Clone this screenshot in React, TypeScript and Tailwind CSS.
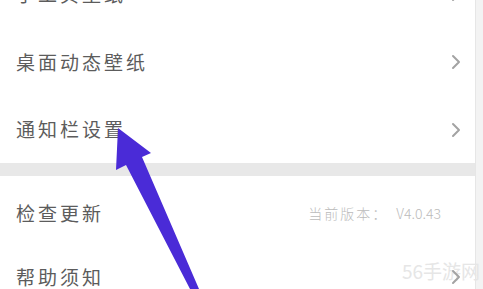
const font = { fontFamily: '"Noto Sans CJK SC", "Noto Sans", sans-serif' };

function Chevron() {
  return (
    <svg width="10" height="16" viewBox="0 0 10 16" className="shrink-0">
      <path d="M2 2 L8 8 L2 14" fill="none" stroke="#a3a3a3" strokeWidth="2" strokeLinecap="round" strokeLinejoin="round" />
    </svg>
  );
}

type Row = { label: string; h: string; arrow?: boolean };

const topRows: Row[] = [
  { label: "手工贝壁纸", h: "h-[68px]", arrow: true },
  { label: "桌面动态壁纸", h: "h-[68px]", arrow: true },
  { label: "通知栏设置", h: "h-[67px]", arrow: true },
];

export default function App() {
  return (
    <div className="relative w-[483px] h-[289px] overflow-hidden bg-white flex items-start" style={font}>
      <div className="w-[475px] shrink-0 flex flex-col -mt-[40px]">
        {topRows.map((r) => (
          <div key={r.label} className={`${r.h} shrink-0 flex items-center justify-between pl-[16px] pr-[14px]`}>
            <span className="text-[19px] tracking-[3px] text-[#5c5c5c]">{r.label}</span>
            {r.arrow && <Chevron />}
          </div>
        ))}
        <div className="h-[13px] shrink-0 bg-[#e8e8e8]" />
        <div className="h-[74px] shrink-0 flex items-center justify-between pl-[16px] pr-[34px]">
          <span className="text-[19px] tracking-[3px] text-[#5c5c5c]">检查更新</span>
          <span className="text-[14px] font-light text-[#bbbbbb]">
            <span className="tracking-[2px]">当前版本：</span>
            <span className="ml-[8px]">V4.0.43</span>
          </span>
        </div>
        <div className="h-[60px] shrink-0 flex items-start justify-between pl-[16px] pr-[14px] pt-[13px]">
          <span className="text-[19px] tracking-[3px] text-[#5c5c5c]">帮助须知</span>
          <div className="mt-[6px] relative z-10"><Chevron /></div>
        </div>
      </div>
      <div className="w-[8px] h-full shrink-0 bg-[#f3f3f3] border-l border-[#e6e6e6]" />

      <div className="absolute left-[402px] top-[259px] text-[19px] leading-[24px] whitespace-nowrap text-[#e6e6e6] pointer-events-none">56手游网</div>

      <svg className="absolute left-0 top-0 pointer-events-none" width="483" height="289" viewBox="0 0 483 289">
        <polygon
          points="118,128 151,153 142,157 199,289 190,289 126,165 116,170"
          fill="#4a2bd7"
        />
      </svg>
    </div>
  );
}
